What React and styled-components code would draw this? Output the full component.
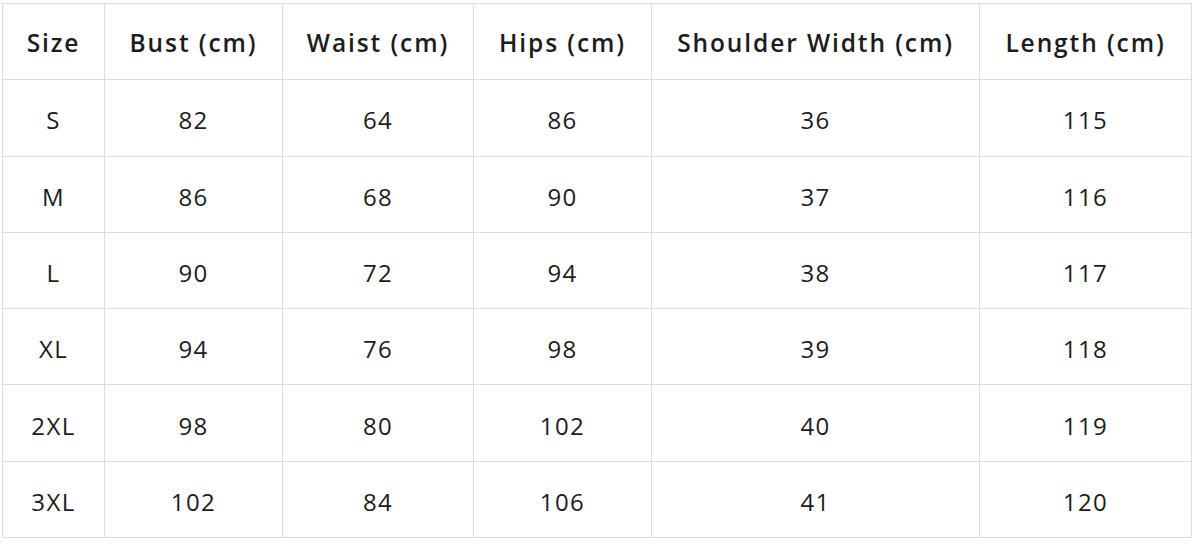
import React from "react";
import styled, { createGlobalStyle } from "styled-components";

const GlobalStyle = createGlobalStyle`
  html, body {
    margin: 0;
    padding: 0;
    background: #ffffff;
  }
`;

const headers = [
  "Size",
  "Bust (cm)",
  "Waist (cm)",
  "Hips (cm)",
  "Shoulder Width (cm)",
  "Length (cm)",
];

const widths = [102, 178, 191, 178, 328, 212];

const rows = [
  ["S", 82, 64, 86, 36, 115],
  ["M", 86, 68, 90, 37, 116],
  ["L", 90, 72, 94, 38, 117],
  ["XL", 94, 76, 98, 39, 118],
  ["2XL", 98, 80, 102, 40, 119],
  ["3XL", 102, 84, 106, 41, 120],
];

export default function App() {
  return (
    <Page>
      <GlobalStyle />
      <SizeTable>
        <colgroup>
          {widths.map((w, i) => (
            <col key={i} style={{ width: w }} />
          ))}
        </colgroup>
        <thead>
          <tr>
            {headers.map((h) => (
              <HeadCell key={h}>{h}</HeadCell>
            ))}
          </tr>
        </thead>
        <tbody>
          {rows.map((r) => (
            <tr key={r[0]}>
              {r.map((v, i) => (
                <Cell key={i}>{v}</Cell>
              ))}
            </tr>
          ))}
        </tbody>
      </SizeTable>
    </Page>
  );
}

const Page = styled.div`
  padding: 3px 0 0 2px;
`;

const SizeTable = styled.table`
  border-collapse: collapse;
  table-layout: fixed;
  width: 1190px;
  font-family: "Open Sans", "Noto Sans", sans-serif;
  color: #1c1c1c;
  text-align: center;

  tr {
    height: 76.3px;
  }
`;

const HeadCell = styled.th`
  border: 1px solid #dcdcdc;
  font-size: 24.5px;
  font-weight: 600;
  padding: 1px 0 0 0;
  letter-spacing: 1.9px;
`;

const Cell = styled.td`
  border: 1px solid #dcdcdc;
  font-size: 24px;
  font-weight: 400;
  padding: 4px 0 0 0;
  letter-spacing: 1.4px;
`;
